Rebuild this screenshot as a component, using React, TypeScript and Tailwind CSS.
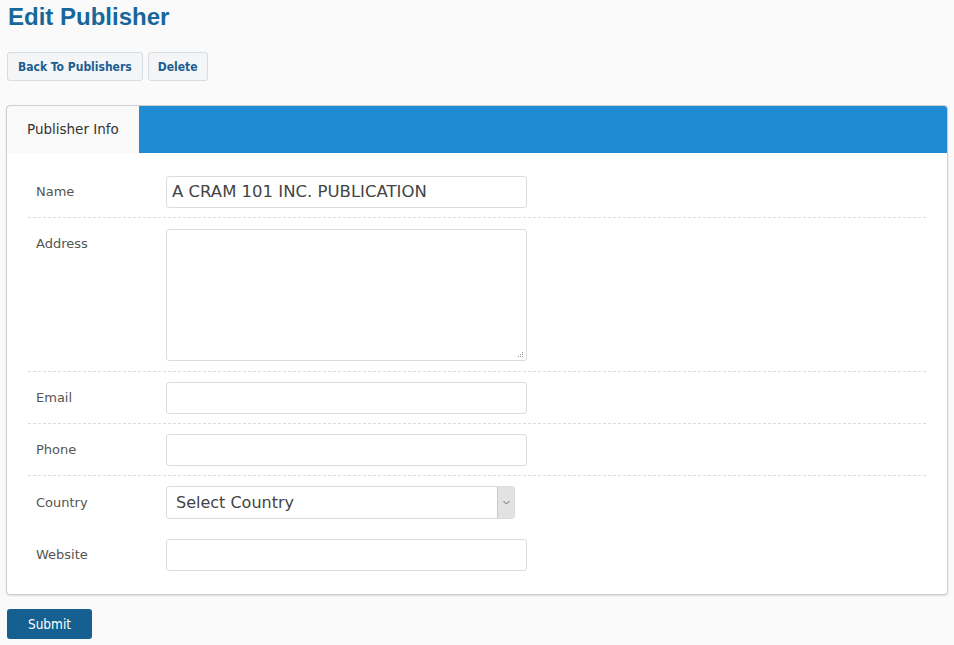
import React from "react"

const rows: { label: string; kind: "input" | "textarea" | "select"; value?: string; line: boolean }[] = [
  { label: "Name", kind: "input", value: "A CRAM 101 INC. PUBLICATION", line: true },
  { label: "Address", kind: "textarea", line: true },
  { label: "Email", kind: "input", line: true },
  { label: "Phone", kind: "input", line: true },
  { label: "Country", kind: "select", line: false },
  { label: "Website", kind: "input", line: false },
]

function Field({ kind, value }: { kind: string; value?: string }) {
  if (kind === "textarea") {
    return (
      <div className="relative w-[361px] h-[132px] bg-white border border-[#dcdcdc] rounded-[3px]">
        {/* resize grip */}
        <svg className="absolute right-[2px] bottom-[2px]" width="7" height="7" viewBox="0 0 7 7">
          <rect x="5" y="1" width="1" height="1" fill="#999" />
          <rect x="3" y="3" width="1" height="1" fill="#999" />
          <rect x="5" y="3" width="1" height="1" fill="#999" />
          <rect x="1" y="5" width="1" height="1" fill="#999" />
          <rect x="3" y="5" width="1" height="1" fill="#999" />
          <rect x="5" y="5" width="1" height="1" fill="#999" />
        </svg>
      </div>
    )
  }
  if (kind === "select") {
    return (
      <div className="flex w-[349px] h-[33px] bg-white border border-[#dcdcdc] rounded-[3px] overflow-hidden">
        <div className="flex-1 flex items-center pl-[9px] text-[16px] text-[#444]">
          Select Country
        </div>
        <div className="w-[17px] flex items-center justify-center bg-[#e2e2e2] border-l border-[#c8c8c8]">
          <svg width="7" height="5" viewBox="0 0 7 5">
            <path d="M0.5 1 L3.5 4 L6.5 1" fill="none" stroke="#666" strokeWidth="1" />
          </svg>
        </div>
      </div>
    )
  }
  return (
    <div className="flex items-center w-[361px] h-[32px] bg-white border border-[#dcdcdc] rounded-[3px] px-[5px] text-[16.5px] text-[#444]">
      {value}
    </div>
  )
}

function rowPad(label: string) {
  switch (label) {
    case "Address":
      return "pt-[11px] pb-[10px] border-b border-dashed border-[#dddddd]"
    case "Country":
      return "pt-[10px] pb-[10px]"
    case "Website":
      return "pt-[10px] pb-[12px]"
    default:
      return "pt-[10px] pb-[9px] border-b border-dashed border-[#dddddd]"
  }
}

export default function App() {
  return (
    <div className="min-h-[645px] bg-[#fafafa] px-[6px] pt-[3px] font-['DejaVu_Sans',sans-serif]">
      <h1 className="pl-[2px] text-[24px] leading-[28px] font-bold text-[#17679b] font-['Liberation_Sans',Arial,sans-serif]">
        Edit Publisher
      </h1>

      {/* Actions */}
      <div className="flex gap-[5px] mt-[21px] pl-[1px]">
        <button className="h-[29px] px-[10px] bg-[#f3f5f7] border border-[#d5dde4] rounded-[3px] text-[12px] font-bold text-[#1d5e91] font-['DejaVu_Sans_Condensed','DejaVu_Sans',sans-serif]">
          Back To Publishers
        </button>
        <button className="h-[29px] px-[9px] bg-[#f3f5f7] border border-[#d5dde4] rounded-[3px] text-[12px] font-bold text-[#1d5e91] font-['DejaVu_Sans_Condensed','DejaVu_Sans',sans-serif]">
          Delete
        </button>
      </div>

      {/* Panel */}
      <div className="mt-[24px] w-[942px] bg-white border border-[#cfcfcf] rounded-[4px] shadow-[0_1px_2px_rgba(0,0,0,0.12)] overflow-hidden">
        <div className="flex h-[47px] bg-[#1f8bd3]">
          <div className="flex items-center w-[132px] pl-[20px] bg-[#f9f9f9] text-[13.5px] text-[#333]">
            Publisher Info
          </div>
        </div>

        <div className="px-[21px] pt-[13px] pb-[11px]">
          {rows.map((r) => (
            <div key={r.label} className={`flex pr-[20px] ${rowPad(r.label)}`}>
              <div
                className={`w-[138px] pl-[8px] text-[13px] text-[#555] ${
                  r.kind === "textarea" ? "pt-[5px]" : "flex items-center"
                }`}
              >
                {r.label}
              </div>
              <Field kind={r.kind} value={r.value} />
            </div>
          ))}
        </div>
      </div>

      <button className="mt-[14px] ml-[1px] h-[30px] w-[85px] bg-[#165f91] rounded-[3px] text-[13.5px] text-white font-['DejaVu_Sans_Condensed','DejaVu_Sans',sans-serif]">
        Submit
      </button>
    </div>
  )
}
